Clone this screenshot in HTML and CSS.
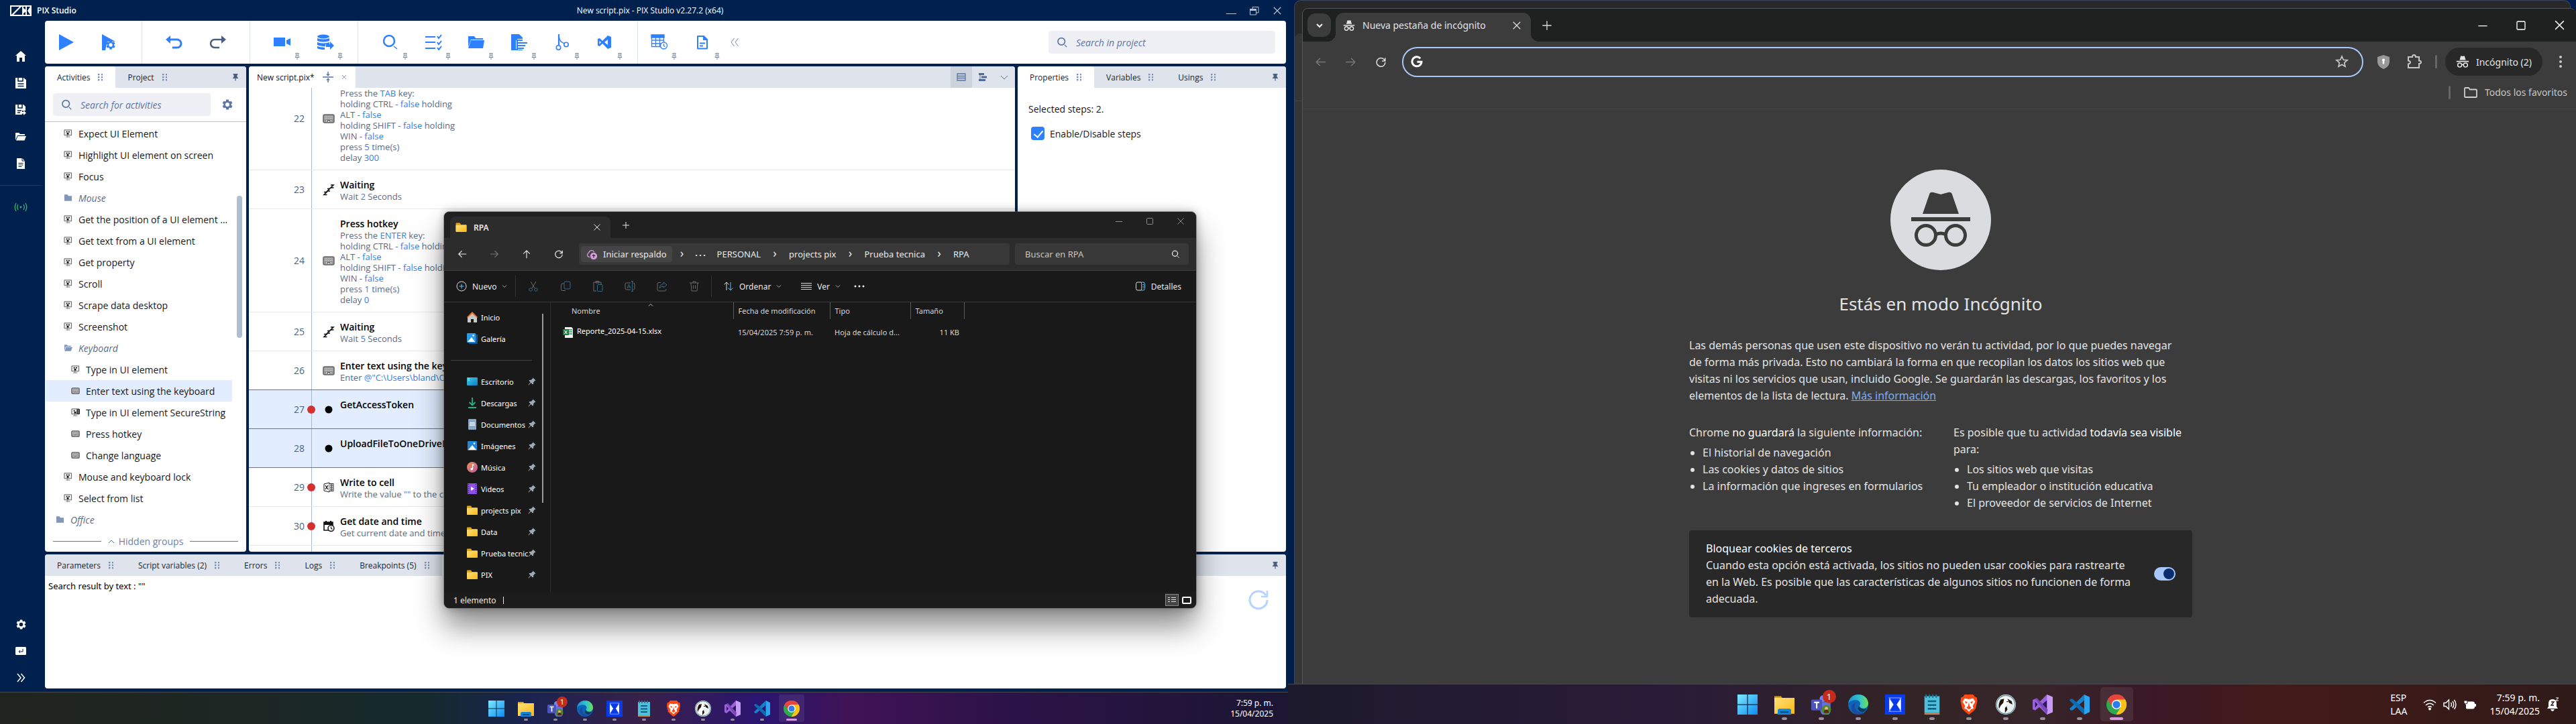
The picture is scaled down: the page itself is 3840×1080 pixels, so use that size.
FILE: index.html
```html
<!DOCTYPE html>
<html lang="es">
<head>
<meta charset="utf-8">
<title>PIX Studio</title>
<link rel="stylesheet" href="styles.css">
</head>
<body>
<svg class="sprite" aria-hidden="true">
  <defs>
    <linearGradient id="gWin" x1="0" y1="0" x2="1" y2="1"><stop offset="0" stop-color="#7fe9ff"/><stop offset="1" stop-color="#0a8cf0"/></linearGradient>
    <linearGradient id="gFolder" x1="0" y1="0" x2="1" y2="1"><stop offset="0" stop-color="#ffe07a"/><stop offset="1" stop-color="#f9b915"/></linearGradient>
    <linearGradient id="gEdge" x1="0" y1="0" x2="1" y2="0"><stop offset="0" stop-color="#1b8fd8"/><stop offset=".6" stop-color="#35c6c8"/><stop offset="1" stop-color="#6fe04e"/></linearGradient>
    <linearGradient id="gDesk" x1="0" y1="0" x2="1" y2="1"><stop offset="0" stop-color="#3ed0e8"/><stop offset="1" stop-color="#0b7cc0"/></linearGradient>
    <linearGradient id="gMusic" x1="0" y1="0" x2="1" y2="1"><stop offset="0" stop-color="#f09055"/><stop offset="1" stop-color="#b85a9a"/></linearGradient>
  </defs>
  <symbol id="ui" viewBox="0 0 14 14"><path d="M1 1.500h11.500v8.500H1z" fill="#eee" stroke="#555"/><path d="M6 10v2M3.500 12.500h6.500" stroke="#666" fill="none"/><path d="M4 3.500h2v2H4zM7.500 3.500h2v2h-2zM5 6h3v3H5z" fill="#111"/></symbol>
  <symbol id="uis" viewBox="0 0 14 14"><path d="M1 1.500h11.500v8.500H1z" fill="#eee" stroke="#555"/><path d="M6 10v2M3.500 12.500h6.500" stroke="#666" fill="none"/><path d="M4 3.500h2v2H4zM5 6h3v3H5z" fill="#111"/><path d="M9 2h5v8H9z" fill="#222"/><path d="M10.500 4h2M10.500 6h2M10.500 8h2" stroke="#ccc"/></symbol>
  <symbol id="key" viewBox="0 0 18 14"><rect x="1" y="1" width="16" height="12" rx="2" fill="#999" stroke="#666" stroke-width="1.500"/><path d="M3 4h12M3 6.500h12" stroke="#ddd" stroke-dasharray="1.500 1"/><path d="M5 9h8v3H5z" fill="#ccc"/><path d="M7 12V9.500h4V12" fill="none" stroke="#555"/></symbol>
  <symbol id="fold" viewBox="0 0 14 12"><path d="M1 1h5l1.500 2H13v8H1z" fill="#8496b5"/></symbol>
  <symbol id="foldo" viewBox="0 0 14 12"><path d="M1 11V1h4l1.500 1.500H12V4H3z" fill="#8496b5"/><path d="M3.500 5H14l-2.500 6H1.500z" fill="#8496b5"/></symbol>
  <symbol id="zzz" viewBox="0 0 18 18"><path d="M2 12.500h4L2 16.500h4.500M7 7.500h3.500L7 11h4M12 2h4l-4 4h4.500" fill="none" stroke="#111" stroke-width="1.600"/></symbol>
  <symbol id="dot" viewBox="0 0 18 18"><circle cx="9" cy="9" r="5.500"/></symbol>
  <symbol id="xl" viewBox="0 0 18 18"><path d="M2 4l8-2v14l-8-2z" fill="#fff" stroke="#222"/><path d="M4 6l4 6M8 6l-4 6" stroke="#111" stroke-width="1.300"/><path d="M10 3.500h6v11h-6" fill="#ddd" stroke="#333"/><path d="M11 6h4M11 9h4M11 12h4M13 4v10" stroke="#444"/></symbol>
  <symbol id="cal" viewBox="0 0 18 18"><path d="M2 3h13v12H2z" fill="none" stroke="#111" stroke-width="1.600"/><path d="M2 3h13v4H2zM4 1h2v3H4zM11 1h2v3h-2z" fill="#111"/><circle cx="12.500" cy="12" r="4.500" fill="#fff" stroke="#111" stroke-width="1.500"/><path d="M12.500 9.500V12l2 1.500" fill="none" stroke="#111" stroke-width="1.200"/></symbol>
  <symbol id="gear" viewBox="0 0 24 24"><path fill="currentColor" fill-rule="evenodd" d="M19.400 13a7.500 7.500 0 0 0 0-2l2.100-1.600a.5.5 0 0 0 .1-.6l-2-3.500a.5.5 0 0 0-.6-.2l-2.500 1a7.300 7.300 0 0 0-1.700-1L14.500 2.400a.5.5 0 0 0-.5-.4h-4a.5.5 0 0 0-.5.400L9.200 5.100a7.700 7.700 0 0 0-1.700 1l-2.500-1a.5.5 0 0 0-.6.200l-2 3.500a.5.5 0 0 0 .1.600L4.600 11a7.900 7.900 0 0 0 0 2l-2.100 1.600a.5.5 0 0 0-.1.600l2 3.500c.1.200.4.300.6.200l2.500-1a7.300 7.300 0 0 0 1.700 1l.4 2.700c0 .2.200.4.500.4h4c.2 0 .5-.2.500-.4l.4-2.700a7.700 7.700 0 0 0 1.700-1l2.500 1c.2.100.5 0 .6-.2l2-3.500a.5.5 0 0 0-.1-.6zM12 16a4 4 0 1 1 0-8 4 4 0 0 1 0 8z"/></symbol>
  <symbol id="mag" viewBox="0 0 20 20"><circle cx="8.500" cy="8" r="6.200" fill="none" stroke="currentColor" stroke-width="2"/><path d="M14 14l4 4" stroke="currentColor" stroke-width="1.500"/></symbol>
  <symbol id="pin" viewBox="0 0 10 12"><path fill="currentColor" d="M1.500 1h7v1.500h-1V6l1.500 1v1H5.600v3.500H4.400V8H1V7l1.500-1V2.500h-1z"/></symbol>
  <symbol id="pino" viewBox="0 0 8 12"><path d="M1.500 1.500h5M2.200 2v4L1 7.500h6L5.800 6V2M4 7.500V11M4 3v3" fill="none" stroke="#7487a8"/></symbol>
  <symbol id="wpin" viewBox="0 0 12 12"><path d="M7.500.5l4 4-1.300.6-2 2.200-.2 2.500-1 .6-2.400-2.400L1 11.500l-.5-.5 3.300-3.700L1.500 5l.7-1 2.600-.2L7 1.800z" fill="#a0a8b0"/></symbol>
  <symbol id="wfold" viewBox="0 0 16 16"><path d="M0 2.500A1 1 0 0 1 1 1.500h5L7.500 4H15a1 1 0 0 1 1 1v9a1 1 0 0 1-1 1H1a1 1 0 0 1-1-1z" fill="#e8a40c"/><path d="M0 5h16v9a1 1 0 0 1-1 1H1a1 1 0 0 1-1-1z" fill="url(#gFolder)"/></symbol>
  <symbol id="chev" viewBox="0 0 8 8"><path d="M1 2.500l3 3 3-3" fill="none" stroke="currentColor"/></symbol>
  <symbol id="x" viewBox="0 0 12 12"><path d="M1.500 1.500l9 9M10.500 1.500l-9 9" stroke="currentColor" fill="none"/></symbol>
  <symbol id="plus" viewBox="0 0 12 12"><path d="M6 1v10M1 6h10" stroke="currentColor" fill="none"/></symbol>
  <symbol id="min" viewBox="0 0 12 12"><path d="M1 6.500h10" stroke="currentColor"/></symbol>
  <symbol id="max" viewBox="0 0 12 12"><rect x="1.500" y="1.500" width="9" height="9" rx="1" fill="none" stroke="currentColor"/></symbol>
  <symbol id="back" viewBox="0 0 16 16"><path d="M15 8H2M7.500 2.500L2 8l5.500 5.500" fill="none" stroke="currentColor" stroke-width="1.300"/></symbol>
  <symbol id="fwd" viewBox="0 0 16 16"><path d="M1 8h13M8.500 2.500L14 8l-5.500 5.500" fill="none" stroke="currentColor" stroke-width="1.300"/></symbol>
  <symbol id="up" viewBox="0 0 16 16"><path d="M8 15V2M2.500 7.500L8 2l5.500 5.500" fill="none" stroke="currentColor" stroke-width="1.300"/></symbol>
  <symbol id="reload" viewBox="0 0 16 16"><path d="M13.500 6A6 6 0 1 0 14 8.500M14 2v4.500H9.500" fill="none" stroke="currentColor" stroke-width="1.400"/></symbol>
  <symbol id="spy" viewBox="0 0 24 24"><path fill="currentColor" d="M8.500 2.500c.3-.8 1-1 1.700-.8l1.800.6 1.800-.6c.7-.2 1.400 0 1.700.8L17.500 9H6.500zM1 10.500h22v2H1z"/><g fill="none" stroke="currentColor" stroke-width="1.900"><circle cx="6.800" cy="18" r="3.600"/><circle cx="17.200" cy="18" r="3.600"/><path d="M10.300 17.500q1.700-1.200 3.400 0"/></g></symbol>
  <!-- task bar programs -->
  <symbol id="t-win" viewBox="0 0 24 24"><path fill="url(#gWin)" d="M0 0h11.500v11.500H0zM12.500 0H24v11.500H12.500zM0 12.500h11.500V24H0zM12.500 12.500H24V24H12.500z"/></symbol>
  <symbol id="t-exp" viewBox="0 0 24 24"><path d="M0 2h8l2 3H0z" fill="#e0a008"/><path d="M0 4h24v19H0z" fill="url(#gFolder)"/><path d="M4 24v-5a2 2 0 0 1 2-2h12a2 2 0 0 1 2 2v5z" fill="#1583d6"/><path d="M7 20h10v2H7z" fill="#0b4f8c"/></symbol>
  <symbol id="t-team" viewBox="0 0 24 24"><circle cx="14" cy="5" r="4" fill="#7b83eb"/><path d="M9 9h14v9a6 6 0 0 1-12 2z" fill="#6870d8"/><rect y="6" width="13" height="13" rx="1.500" fill="#4b53bc"/><path d="M3.500 9.500h6M6.500 9.500v7" stroke="#fff" stroke-width="1.700"/><circle cx="18" cy="18" r="5.500" fill="#4a8a28"/><circle cx="18" cy="16.500" r="2" fill="#e8b08a"/><path d="M15 22q0-4 3-4t3 4z" fill="#5a2a20"/></symbol>
  <symbol id="t-edge" viewBox="0 0 24 24"><circle cx="12" cy="12" r="12" fill="#0c66b8"/><path d="M0 11C1 4 6 0 12 0c7 0 12 5 12 10.500 0 4-3 6-6 6-3 0-4.500-1.300-4.500-2.500s1-1.500 1-3.200C14.500 8 12 6.500 9 6.500 4.500 6.500 1 8.500 0 11z" fill="url(#gEdge)"/><path d="M8 12c-1 6 4 10 10 9.500C12 26 4 23 4 16c0-3 2-5.500 5-6z" fill="#1b4aa0"/><path d="M13.500 14c1 3 5 4 8.500 3-1 2-3 3.500-5 4-5-1-7-5-3.500-7z" fill="#0d2638" opacity=".7"/></symbol>
  <symbol id="t-pix" viewBox="0 0 24 24"><path d="M0 0h24v24H0z" fill="#0a3be8"/><path d="M5 4h14l-4.500 8L19 20H5l4.500-8z" fill="none" stroke="#8fa8ff"/><path d="M5 5l5 7-5 7zM19 5l-5 7 5 7z" fill="#fff"/><path d="M7 4.500h10L12 11zM7 19.500h10L12 13z" fill="#0a3be8"/></symbol>
  <symbol id="t-note" viewBox="0 0 24 24"><path d="M3 2h18v20H3z" fill="#4fc0dc"/><path d="M3 22h18v2H3z" fill="#d0824a"/><path d="M5 0v4M9 0v4M13 0v4M17 0v4" stroke="#1a7b9a" stroke-width="1.600"/><path d="M7 8h10M7 12.500h10M7 17h10" stroke="#0b5f80" stroke-width="2"/></symbol>
  <symbol id="t-brave" viewBox="0 0 24 24"><path d="M7 0h10l2 2.500 2.500 1L22 8l-2 9-4 4-4 3-4-3-4-4L2 8l.5-4.500L5 2.500z" fill="#fb4a14"/><path d="M7 4.500l5 1 5-1 2.500 4-3 5 1 3-3 1-2.500 3-2.500-3-3-1 1-3-3-5z" fill="#fff"/><path d="M7 8l3.500 1-2 2zM17 8l-3.500 1 2 2zM12 9l1 5 2 1.500L12 18l-3-2.500 2-1.500z" fill="#fb4a14"/></symbol>
  <symbol id="t-beaver" viewBox="0 0 24 24"><circle cx="12" cy="12" r="12" fill="#e8efee"/><circle cx="12" cy="12" r="11" fill="none" stroke="#5d8f92" stroke-width="1"/><path d="M7 5c3-3 8-2 10 1l2 4c-1 2-3 2-5 1l-2 3c2 3 1 6-2 8-3-1-5-3-5-6l3-5z" fill="#fff"/><path d="M6 6l4-1-1 5-3 3-2 4c-1-4 0-8 2-11zM14 5l5 3 1 4-4-2zM11 16l2-2 1 4-3 4zM13 8h2v1h-2z" fill="#20160f"/></symbol>
  <symbol id="t-vs" viewBox="0 0 24 24"><path d="M17 0l7 3v18l-7 3-9-9-5 4-3-1.500v-11L3 5l5 4z" fill="#9a62d8"/><path d="M17 0l7 3v18l-7 3z" fill="#c79bf5"/><path d="M3 8.500v7L6 12zM17 7l-6 5 6 5z" fill="#2a1560"/><path d="M3 5L17 24l1-6L5 4z" fill="#7a48b8"/></symbol>
  <symbol id="t-code" viewBox="0 0 24 24"><path d="M17.500 0L24 3v18l-6.500 3z" fill="#2aa5f0"/><path d="M17.500 0v7L4 18.500 1.500 19 0 17z" fill="#1780c8"/><path d="M17.500 24v-7L4 5.500 1.500 5 0 7z" fill="#0b6cb4"/></symbol>
  <symbol id="t-chrome" viewBox="0 0 24 24"><circle cx="12" cy="12" r="12" fill="#2da94f"/><path d="M12 12L1.600 6A12 12 0 0 1 22.400 6z" fill="#e8453c"/><path d="M1.600 6L7 15l5-9h10.400A12 12 0 0 0 1.600 6z" fill="#e8453c"/><path d="M22.400 6H12l5 9-5.500 9A12 12 0 0 0 22.400 6z" fill="#fbc116"/><circle cx="12" cy="12" r="5.700" fill="#fff"/><circle cx="12" cy="12" r="4.500" fill="#2f7de8"/></symbol>
</svg>

<section class="monitor monitor-left">
  <main class="pix">
    <header class="pix-title">
      <span class="brand"><svg width="32" height="16" viewBox="0 0 32 16"><path d="M0 0h32v16H0z" fill="#fff"/><path d="M2 2h12L2 14zM17 2h1v12h-13L16 3zM20 2h3v12h-3zM25 14V2h5l-4 6 4 6z" fill="#00204d"/><path d="M20 4l5 4-5 4z" fill="#fff"/></svg>PIX Studio</span>
      <h1>New script.pix - PIX Studio v2.27.2 (x64)</h1>
      <span class="pix-ctl">
        <button aria-label="Minimize"><svg width="16" height="14"><path d="M0 11.500h15" stroke="#b8c2d2"/></svg></button>
        <button aria-label="Restore"><svg width="16" height="14"><path d="M1.500 5h9v8h-9zM5 4V1.500h9V10h-3" fill="none" stroke="#b8c2d2"/><path d="M1 4h10v3H1z" fill="#b8c2d2"/></svg></button>
        <button aria-label="Close"><svg width="14" height="14" class="c-b8"><use href="#x"/></svg></button>
      </span>
    </header>
    <div class="pix-body">
      <nav class="rail" aria-label="Main menu">
        <button aria-label="Home"><svg width="16" height="16"><path d="M8 0l8 7h-2v9h-4v-6H6v6H2V7H0z" fill="#fff"/></svg></button>
        <button aria-label="Save"><svg width="16" height="16"><path d="M0 0h12l4 3v13H0z" fill="#fff"/><path d="M4 0v5h7V0M3.500 9h9M3.500 12.500h9" fill="none" stroke="#00204d" stroke-width="1.500"/></svg></button>
        <button aria-label="Save as"><svg width="16" height="16"><path d="M0 0h12l3 3v6h-5v6H0z" fill="#fff"/><path d="M4 0v5h6V0M3 9h6M3 12h4" fill="none" stroke="#00204d" stroke-width="1.500"/><path d="M8 11h4V8.500l4 4-4 3.500v-2.500H8z" fill="#fff"/></svg></button>
        <button aria-label="Open"><svg width="16" height="12"><path d="M0 11V0h5l2 2h7v2H3z" fill="#fff"/><path d="M3.500 5H16l-2.500 6.500H1z" fill="#fff"/></svg></button>
        <button aria-label="New"><svg width="14" height="16"><path d="M1 0h8l4 4v12H1z" fill="#fff"/><path d="M9 0v4h4M3.500 7.500h7M3.500 10h7M3.500 12.500h5" fill="none" stroke="#00204d"/></svg></button>
        <hr>
        <button aria-label="Connection"><svg width="20" height="14" fill="none" stroke="#39b56a" stroke-width="1.300"><path d="M3 1q-3.500 6 0 12M6 3q-2.500 4 0 8M17 1q3.500 6 0 12M14 3q2.500 4 0 8"/><circle cx="10" cy="7" r=".8"/></svg></button>
        <span class="grow"></span>
        <button aria-label="Settings"><svg width="17" height="17" class="c-w"><use href="#gear"/></svg></button>
        <button aria-label="Console"><svg width="16" height="12"><rect width="16" height="12" rx="1.500" fill="#fff"/><path d="M11 3v4H5M7 5L5 7l2 2" fill="none" stroke="#00204d"/></svg></button>
        <button aria-label="Expand"><svg width="14" height="14" fill="none" stroke="#fff" stroke-width="1.500"><path d="M2 1l5 6-5 6M7.500 1l5 6-5 6"/></svg></button>
      </nav>
      <div class="work">
        <div class="tools">
          <div class="grp first">
            <button aria-label="Run"><svg width="24" height="24"><path d="M1 0l22 12L1 24z" fill="#2f80ff"/></svg></button>
            <button aria-label="Debug"><svg width="24" height="24"><path d="M1 0l20 11H9l-3 13H1z" fill="#2f80ff"/><svg x="6" y="8" width="16" height="16" class="c-blue"><use href="#gear"/></svg></svg></button>
          </div>
          <div class="grp">
            <button aria-label="Undo"><svg width="26" height="20" fill="none" stroke="#2f80ff" stroke-width="3"><path d="M3 6h14a6 6 0 0 1 0 12h-7"/><path d="M0 6l7-6v12z" fill="#2f80ff" stroke="none"/></svg></button>
            <button aria-label="Redo"><svg width="26" height="20" fill="none" stroke="#4a5f80" stroke-width="2.500"><path d="M23 6H9a6 6 0 0 0 0 12h7"/><path d="M26 6l-7-6v12z" fill="#4a5f80" stroke="none"/></svg></button>
          </div>
          <div class="grp">
            <button aria-label="Record"><svg width="26" height="14" fill="#2f80ff"><path d="M0 0h17v13H0zM19 4l6-3v11l-6-3z"/></svg><svg class="tp"><use href="#pino"/></svg></button>
            <button aria-label="Database"><svg width="26" height="24" fill="#2f80ff"><ellipse cx="10" cy="3.500" rx="9" ry="3"/><path d="M1 6q9 3 18 0v4q-9 3-18 0zM1 12q9 3 18 0v3h-6v3q-8 0-12-2zM1 18q5 2 11 1.800V23Q4 23 1 21z"/><path d="M14 15h6v-4l6 6-6 6v-4h-6z"/></svg><svg class="tp"><use href="#pino"/></svg></button>
          </div>
          <div class="grp">
            <button aria-label="Find"><svg width="26" height="24" fill="none" stroke="#2f80ff"><circle cx="11" cy="10" r="8" stroke-width="2.500"/><path d="M18 18l5 4" stroke-width="1.500"/></svg><svg class="tp"><use href="#pino"/></svg></button>
            <button aria-label="Checks"><svg width="26" height="24" fill="none" stroke="#2f80ff" stroke-width="2"><path d="M1 4h15M1 12h15M1 21h15M19 3l2 3 4-5M19 12l2 3 4-5M19 20l2 3 4-5"/></svg><svg class="tp"><use href="#pino"/></svg></button>
            <button aria-label="Folder"><svg width="26" height="22" fill="#2f80ff"><path d="M1 18V2h9l2 3h11v2H5z"/><path d="M5 8h20l-2 12H1z"/></svg><svg class="tp"><use href="#pino"/></svg></button>
            <button aria-label="Outline"><svg width="26" height="24"><path d="M1 0h12l5 5v19H1z" fill="#2f80ff"/><path d="M10 9h8M11 13h14M11 17h11M11 21h9M10 9v13" stroke="#fff" stroke-width="4"/><path d="M10 9h8M11 13h14M11 17h11M11 21h9M10 9v13" stroke="#2f80ff" stroke-width="2"/></svg><svg class="tp"><use href="#pino"/></svg></button>
            <button aria-label="Branch"><svg width="20" height="24" fill="none" stroke="#2f80ff" stroke-width="1.600"><path d="M5 0v17" stroke-width="2.200"/><path d="M5 3q1 9 9 11"/><circle cx="4.500" cy="20" r="3.200"/><circle cx="16" cy="15.500" r="3.200"/></svg><svg class="tp"><use href="#pino"/></svg></button>
            <button aria-label="Visual Studio"><svg width="22" height="20"><path fill="#2f80ff" fill-rule="evenodd" d="M0 5l3-1 4 4L15 0l5 2v16l-5 2-8-8-4 4-3-1zM2.500 8v5L5 10zM15 6l-5 4 5 4z"/></svg><svg class="tp"><use href="#pino"/></svg></button>
          </div>
          <div class="grp last">
            <button aria-label="Schedule"><svg width="26" height="24" fill="none" stroke="#2f80ff" stroke-width="1.300"><path d="M1.500 1.500h18v17h-18zM1.500 9h18M1.500 14h18M7.500 4v14M13.500 4v14"/><path d="M1 1h19v4H1z" fill="#2f80ff"/><circle cx="19.500" cy="17" r="5" fill="#fff"/><path d="M19.500 14v3.500l2 1"/></svg><svg class="tp"><use href="#pino"/></svg></button>
            <button aria-label="Report"><svg width="18" height="22"><path fill="#2f80ff" fill-rule="evenodd" d="M3 1h8.500L17 6.500V20a1.500 1.500 0 0 1-1.500 1.500h-13A1.500 1.500 0 0 1 1 20V2.500A1.500 1.500 0 0 1 3 1zM3 3v16.500h12V8h-5V3z"/><path d="M5 12.500h8M5 16.500h5" stroke="#2f80ff" stroke-width="1.800"/></svg><svg class="tp"><use href="#pino"/></svg></button>
          </div>
          <button class="fold-btn" aria-label="Collapse"><svg width="12" height="14" fill="none" stroke="#7487a8"><path d="M5.500 1L1 7l4.500 6M11.500 1L7 7l4.500 6"/></svg></button>
          <label class="field field-project"><svg width="17" height="17"><use href="#mag"/></svg><input type="search" placeholder="Search in project" aria-label="Search in project"></label>
        </div>

        <div class="panels">
          <section class="panel acts">
            <div class="tabs"><button class="tab on">Activities<i class="grip"></i></button><button class="tab">Project<i class="grip"></i></button><button class="tabpin" aria-label="Pin"><svg width="10" height="12"><use href="#pin"/></svg></button></div>
            <div class="findrow"><label class="field field-act"><svg width="17" height="17"><use href="#mag"/></svg><input type="search" placeholder="Search for activities" aria-label="Search for activities"></label><button aria-label="Filter settings"><svg width="18" height="18" class="c-slate"><use href="#gear"/></svg></button></div>
            <ul class="tree">
              <li><svg><use href="#ui"/></svg>Expect UI Element</li>
              <li><svg><use href="#ui"/></svg>Highlight UI element on screen</li>
              <li><svg><use href="#ui"/></svg>Focus</li>
              <li class="cat"><svg><use href="#fold"/></svg>Mouse</li>
              <li><svg><use href="#ui"/></svg><span>Get the position of a UI element on screen</span></li>
              <li><svg><use href="#ui"/></svg>Get text from a UI element</li>
              <li><svg><use href="#ui"/></svg>Get property</li>
              <li><svg><use href="#ui"/></svg>Scroll</li>
              <li><svg><use href="#ui"/></svg>Scrape data desktop</li>
              <li><svg><use href="#ui"/></svg>Screenshot</li>
              <li class="cat"><svg><use href="#foldo"/></svg>Keyboard</li>
              <li class="sub"><svg><use href="#ui"/></svg>Type in UI element</li>
              <li class="sub sel"><svg><use href="#key"/></svg>Enter text using the keyboard</li>
              <li class="sub"><svg><use href="#uis"/></svg>Type in UI element SecureString</li>
              <li class="sub"><svg><use href="#key"/></svg>Press hotkey</li>
              <li class="sub"><svg><use href="#key"/></svg>Change language</li>
              <li><svg><use href="#ui"/></svg>Mouse and keyboard lock</li>
              <li><svg><use href="#ui"/></svg>Select from list</li>
              <li class="cat top"><svg><use href="#fold"/></svg>Office</li>
            </ul>
            <div class="hidden-groups"><svg width="10" height="7"><path d="M1 6l4-4 4 4" fill="none" stroke="#5b76a3"/></svg>Hidden groups</div>
            <i class="scroll"></i>
          </section>

          <section class="panel editor">
            <div class="tabs"><button class="tab doc on">New script.pix*<svg width="16" height="16" fill="none" stroke="#5b76a3" stroke-width="1.500"><path d="M0 8h16M8 0v6M8 10v6"/><path d="M5 3.500h6L8 6.500zM5 12.500h6L8 9.500z" fill="#5b76a3" stroke="none"/></svg><svg width="8" height="8" class="c-slate"><use href="#x"/></svg></button>
              <span class="grow"></span>
              <button class="vb on" aria-label="List view"><svg width="14" height="12" fill="none" stroke="#5b76a3" stroke-width="1.300"><path d="M1 1h12v10H1zM1 4.500h12M1 7.500h12"/></svg></button>
              <button class="vb" aria-label="Tree view"><svg width="14" height="12" fill="#4e6a98"><path d="M1 0h8v3H1zM5 4.500h8v3H5zM1 9h10v3H1z"/><path d="M3 3v6" stroke="#4e6a98"/></svg></button>
              <button class="vb" aria-label="More"><svg width="12" height="7"><path d="M1 1l5 5 5-5" fill="none" stroke="#5b76a3"/></svg></button>
            </div>
            <ol class="steps">
              <li><b class="n">22</b><svg><use href="#key"/></svg><div><h3>Press hotkey</h3><p>Press the <em>TAB</em> key:<br>holding CTRL - <em>false</em> holding<br>ALT - <em>false</em><br>holding SHIFT - <em>false</em> holding<br>WIN - <em>false</em><br>press <em>5</em> time(s)<br>delay <em>300</em></p></div></li>
              <li><b class="n">23</b><svg><use href="#zzz"/></svg><div><h3>Waiting</h3><p>Wait <em>2</em> Seconds</p></div></li>
              <li><b class="n">24</b><svg><use href="#key"/></svg><div><h3>Press hotkey</h3><p>Press the <em>ENTER</em> key:<br>holding CTRL - <em>false</em> holding<br>ALT - <em>false</em><br>holding SHIFT - <em>false</em> holding<br>WIN - <em>false</em><br>press <em>1</em> time(s)<br>delay <em>0</em></p></div></li>
              <li><b class="n">25</b><svg><use href="#zzz"/></svg><div><h3>Waiting</h3><p>Wait <em>5</em> Seconds</p></div></li>
              <li><b class="n">26</b><svg><use href="#key"/></svg><div><h3>Enter text using the keyboard</h3><p>Enter <em>@"C:\Users\bland\OneDrive"</em></p></div></li>
              <li class="sel"><b class="n">27</b><i class="bp"></i><svg><use href="#dot"/></svg><div><h3>GetAccessToken</h3><p></p></div></li>
              <li class="sel"><b class="n">28</b><svg><use href="#dot"/></svg><div><h3>UploadFileToOneDriveBusiness</h3><p></p></div></li>
              <li><b class="n">29</b><i class="bp"></i><svg><use href="#xl"/></svg><div><h3>Write to cell</h3><p>Write the value <em>""</em> to the cell</p></div></li>
              <li><b class="n">30</b><i class="bp"></i><svg><use href="#cal"/></svg><div><h3>Get date and time</h3><p>Get current date and time</p></div></li>
              <li class="tail"></li>
            </ol>
          </section>

          <section class="panel props">
            <div class="tabs"><button class="tab on">Properties<i class="grip"></i></button><button class="tab">Variables<i class="grip"></i></button><button class="tab">Usings<i class="grip"></i></button><button class="tabpin" aria-label="Pin"><svg width="10" height="12"><use href="#pin"/></svg></button></div>
            <p class="selinfo">Selected steps: 2.</p>
            <label class="check"><input type="checkbox" checked>Enable/Disable steps</label>
          </section>
        </div>

        <section class="panel results">
          <div class="tabs"><button class="tab">Parameters<i class="grip"></i></button><button class="tab">Script variables (2)<i class="grip"></i></button><button class="tab">Errors<i class="grip"></i></button><button class="tab">Logs<i class="grip"></i></button><button class="tab">Breakpoints (5)<i class="grip"></i></button><button class="tab on">Search results<i class="grip"></i></button><button class="tabpin" aria-label="Pin"><svg width="10" height="12"><use href="#pin"/></svg></button></div>
          <div class="resbody"><p>Search result by text : ""</p><button aria-label="Refresh"><svg width="32" height="32" fill="none" stroke="#b5d3ff" stroke-width="3"><path d="M27 10A13 13 0 1 0 29 17"/><path d="M29 3v9h-9" stroke-width="2.500"/></svg></button></div>
        </section>
      </div>
    </div>
  </main>

  <section class="explorer" aria-label="RPA">
    <div class="x-tabs">
      <div class="x-tab"><svg width="17" height="16"><use href="#wfold"/></svg><span>RPA</span><button aria-label="Cerrar pestaña"><svg width="12" height="12"><use href="#x"/></svg></button></div>
      <button class="x-plus" aria-label="Nueva pestaña"><svg width="12" height="12"><use href="#plus"/></svg></button>
      <span class="grow"></span>
      <span class="x-ctl"><button aria-label="Minimizar"><svg width="12" height="12"><use href="#min"/></svg></button><button aria-label="Maximizar"><svg width="12" height="12"><use href="#max"/></svg></button><button aria-label="Cerrar"><svg width="12" height="12"><use href="#x"/></svg></button></span>
    </div>
    <div class="x-nav">
      <span class="x-arrows"><button aria-label="Atrás"><svg><use href="#back"/></svg></button><button class="dim" aria-label="Adelante"><svg><use href="#fwd"/></svg></button><button aria-label="Arriba"><svg><use href="#up"/></svg></button><button aria-label="Actualizar"><svg><use href="#reload"/></svg></button></span>
      <nav class="x-path"><button class="chip"><svg width="17" height="16" fill="none" stroke="#d99be0" stroke-width="1.300"><path d="M5 12.500H4a3.500 3.500 0 0 1-.3-6.500A4.500 4.500 0 0 1 12 5"/><circle cx="11" cy="11" r="4.500" fill="#d99be0"/><path d="M11 13.500V9M9 10.800L11 9l2 1.800" stroke="#333"/></svg>Iniciar respaldo</button><i>›</i><button>⋯</button><button>PERSONAL</button><i>›</i><button>projects pix</button><i>›</i><button>Prueba tecnica</button><i>›</i><button>RPA</button></nav>
      <label class="x-search"><input type="search" placeholder="Buscar en RPA" aria-label="Buscar en RPA"><svg width="13" height="13"><use href="#mag"/></svg></label>
    </div>
    <div class="x-cmd">
      <button class="new"><svg width="16" height="16" fill="none"><circle cx="8" cy="8" r="7" stroke="#ddd"/><path d="M8 4.500v7M4.500 8h7" stroke="#5cc3f5"/></svg>Nuevo<svg class="cv"><use href="#chev"/></svg></button>
      <span class="x-acts">
        <button aria-label="Cortar"><svg fill="none" stroke="#6a6a6a"><path d="M4 1l6 10M12 1L6 11"/><g stroke="#2f6a86"><circle cx="4" cy="13" r="2.300"/><circle cx="12" cy="13" r="2.300"/></g></svg></button>
        <button aria-label="Copiar"><svg fill="none"><rect x="6" y="1" width="9" height="11" rx="2" stroke="#2f6a86"/><path d="M6 4H3.500A2 2 0 0 0 1.500 6v6.500a2 2 0 0 0 2 2H8" stroke="#6a6a6a"/></svg></button>
        <button aria-label="Pegar"><svg fill="none"><path d="M6 15H2V2h11v3M5 2V.5h5V3H5z" stroke="#6a6a6a"/><rect x="7.500" y="5.500" width="7.500" height="10" rx="1" stroke="#2f6a86"/></svg></button>
        <button aria-label="Cambiar nombre"><svg fill="none"><path d="M9 3H3a2 2 0 0 0-2 2v6a2 2 0 0 0 2 2h6M13 3a2 2 0 0 1 2 2v6a2 2 0 0 1-2 2" stroke="#6a6a6a"/><path d="M4 11l2.500-6L9 11M5 9h3M11.500 1v14M10 .5h3M10 15.500h3" stroke="#2f6a86"/></svg></button>
        <button aria-label="Compartir"><svg fill="none"><path d="M6 2.500H3a2 2 0 0 0-2 2V13a2 2 0 0 0 2 2h9a2 2 0 0 0 2-2v-1" stroke="#6a6a6a"/><path d="M10 2l5 4-5 4V8Q6 8 4 11q1-6 6-6.500z" stroke="#2f6a86"/></svg></button>
        <button aria-label="Eliminar"><svg fill="none" stroke="#6a6a6a"><path d="M1 3h14M6 3V1h4v2M3 3l1 12h8l1-12M6.500 6.500v5M9.500 6.500v5"/></svg></button>
      </span>
      <button class="sort"><svg width="16" height="16" fill="none"><path d="M5 14V2M1.500 5.500L5 2l3.500 3.500" stroke="#ddd"/><path d="M11 2v12M7.500 10.500L11 14l3.500-3.500" stroke="#5cc3f5"/></svg>Ordenar<svg class="cv"><use href="#chev"/></svg></button>
      <button class="view"><svg width="16" height="16" stroke="#ddd"><path d="M0 3.500h16M0 6.500h16M0 9.500h16M0 12.500h16"/></svg>Ver<svg class="cv"><use href="#chev"/></svg></button>
      <button class="more" aria-label="Más"><svg width="16" height="4" fill="#eee"><circle cx="2" cy="2" r="1.500"/><circle cx="8" cy="2" r="1.500"/><circle cx="14" cy="2" r="1.500"/></svg></button>
      <span class="grow"></span>
      <button class="det"><svg width="16" height="16" fill="none"><path d="M9 2H4a2.500 2.500 0 0 0-2.500 2.500v7A2.500 2.500 0 0 0 4 14h5" stroke="#ddd"/><path d="M9.500 2H12a2.500 2.500 0 0 1 2.500 2.500v7A2.500 2.500 0 0 1 12 14H9.500zM11 5.500h2M11 8h2M11 10.500h2" stroke="#5cc3f5"/></svg>Detalles</button>
    </div>
    <div class="x-body">
      <nav class="x-side">
        <ul>
          <li><svg viewBox="0 0 16 16"><path d="M1 8l7-6 7 6v8h-5v-5H6v5H1z" fill="#c8c8c8"/><path d="M0 8l8-8 8 8-1 1-7-6-7 6z" fill="#e8732a"/></svg><span>Inicio</span></li>
          <li><svg viewBox="0 0 16 16"><rect x="3" y="2" width="13" height="14" rx="1" fill="#0c5a9c"/><rect width="13" height="14" rx="1" fill="#2b9be8"/><path d="M1 13l6-7 5 7z" fill="#fff"/><circle cx="9.500" cy="3.500" r="1.200" fill="#fff"/></svg><span>Galería</span></li>
        </ul>
        <hr>
        <ul>
          <li><svg viewBox="0 0 16 16"><rect y="2" width="16" height="12" rx="1" fill="url(#gDesk)"/><path d="M2 4h1.500M2 6.500h1.500" stroke="#fff"/></svg><span>Escritorio</span><svg class="wp"><use href="#wpin"/></svg></li>
          <li><svg viewBox="0 0 16 16" fill="none" stroke="#25b089" stroke-width="1.800"><path d="M8 0v11M3.500 7L8 11.500 12.500 7M2 15h12"/></svg><span>Descargas</span><svg class="wp"><use href="#wpin"/></svg></li>
          <li><svg viewBox="0 0 16 16"><rect x="2" width="12" height="16" rx="1" fill="#8aa8c8"/><path d="M4 6h8M4 9h8" stroke="#fff" stroke-width="1.500"/></svg><span>Documentos</span><svg class="wp"><use href="#wpin"/></svg></li>
          <li><svg viewBox="0 0 16 16"><rect x="1" y="1" width="14" height="14" rx="1" fill="#1f86d8"/><path d="M2 14l6-7 6 7z" fill="#fff"/><circle cx="11" cy="4.500" r="1.300" fill="#fff"/></svg><span>Imágenes</span><svg class="wp"><use href="#wpin"/></svg></li>
          <li><svg viewBox="0 0 16 16"><circle cx="8" cy="8" r="8" fill="url(#gMusic)"/><path d="M8.500 10.500V4l2.500 1" fill="none" stroke="#fff" stroke-width="1.300"/><circle cx="7.200" cy="10.800" r="1.700" fill="#fff"/></svg><span>Música</span><svg class="wp"><use href="#wpin"/></svg></li>
          <li><svg viewBox="0 0 16 16"><rect x="1" width="14" height="16" rx="1" fill="#9150e8"/><path d="M2.500 1v14M13.500 1v14" stroke="#4c2098" stroke-width="1.500" stroke-dasharray="1.500 1.500"/><path d="M6 5l5 3-5 3z" fill="#fff"/></svg><span>Videos</span><svg class="wp"><use href="#wpin"/></svg></li>
          <li><svg><use href="#wfold"/></svg><span>projects pix</span><svg class="wp"><use href="#wpin"/></svg></li>
          <li><svg><use href="#wfold"/></svg><span>Data</span><svg class="wp"><use href="#wpin"/></svg></li>
          <li><svg><use href="#wfold"/></svg><span>Prueba tecnica</span><svg class="wp"><use href="#wpin"/></svg></li>
          <li><svg><use href="#wfold"/></svg><span>PIX</span><svg class="wp"><use href="#wpin"/></svg></li>
        </ul>
        <i class="x-scroll"></i>
      </nav>
      <table class="files">
        <thead><tr><th class="c1">Nombre<svg class="caret" viewBox="0 0 8 8"><path d="M1 5.500l3-3 3 3" fill="none" stroke="#bbb"/></svg></th><th class="c2">Fecha de modificación</th><th class="c3">Tipo</th><th class="c4">Tamaño</th></tr></thead>
        <tbody><tr><td><svg width="16" height="16" viewBox="0 0 16 16"><path d="M3 0h10l2 2v14H3z" fill="#f2f2f2"/><path d="M9 4h5M9 7h5M9 10h5" stroke="#2a9a5c" stroke-width="1.500"/><rect y="3" width="9" height="9" fill="#15803f"/><path d="M2.500 5l4 5M6.500 5l-4 5" stroke="#fff" stroke-width="1.200"/></svg>Reporte_2025-04-15.xlsx</td><td>15/04/2025 7:59 p. m.</td><td>Hoja de cálculo d...</td><td class="num">11 KB</td></tr></tbody>
      </table>
    </div>
    <footer class="x-status">1 elemento<i></i><span class="grow"></span>
      <button class="on" aria-label="Detalles"><svg width="12" height="10" stroke="#ddd"><path d="M0 1.500h3M5 1.500h7M0 4.500h3M5 4.500h7M0 7.500h3M5 7.500h7"/></svg></button>
      <button aria-label="Iconos grandes"><svg width="14" height="11"><rect x="1" y="1" width="12" height="9" rx="1" fill="none" stroke="#fff" stroke-width="2"/></svg></button>
    </footer>
  </section>

  <footer class="bar bar-left">
    <span></span>
    <nav class="apps">
      <button aria-label="Inicio"><svg><use href="#t-win"/></svg></button>
      <button class="run" aria-label="Explorador"><svg><use href="#t-exp"/></svg></button>
      <button class="run" aria-label="Teams"><svg><use href="#t-team"/></svg><span class="badge">1</span></button>
      <button class="run" aria-label="Edge"><svg><use href="#t-edge"/></svg></button>
      <button class="run" aria-label="PIX"><svg><use href="#t-pix"/></svg></button>
      <button class="run" aria-label="Bloc de notas"><svg><use href="#t-note"/></svg></button>
      <button class="run" aria-label="Brave"><svg><use href="#t-brave"/></svg></button>
      <button class="run" aria-label="DBeaver"><svg><use href="#t-beaver"/></svg></button>
      <button class="run" aria-label="Visual Studio"><svg><use href="#t-vs"/></svg></button>
      <button class="run" aria-label="Visual Studio Code"><svg><use href="#t-code"/></svg></button>
      <button class="run active" aria-label="Chrome"><svg><use href="#t-chrome"/></svg></button>
    </nav>
    <div class="tray"><time>7:59 p. m.<br>15/04/2025</time></div>
  </footer>
</section>

<section class="monitor monitor-right">
  <div class="desk">
    <div class="behind"><i></i></div>
    <main class="chrome">
      <div class="c-tabs">
        <button class="c-list" aria-label="Buscar pestañas"><svg width="12" height="8" fill="none" stroke="#eee" stroke-width="2"><path d="M2 2l4 4 4-4"/></svg></button>
        <div class="c-tab"><svg width="18" height="18"><use href="#spy"/></svg><span>Nueva pestaña de incógnito</span><button aria-label="Cerrar"><svg width="14" height="14"><use href="#x"/></svg></button></div>
        <button class="c-plus" aria-label="Nueva pestaña"><svg width="16" height="16"><use href="#plus"/></svg></button>
        <span class="grow"></span>
        <span class="c-ctl"><button aria-label="Minimizar"><svg width="16" height="16"><use href="#min"/></svg></button><button aria-label="Maximizar"><svg width="16" height="16"><use href="#max"/></svg></button><button aria-label="Cerrar ventana"><svg width="17" height="17"><use href="#x"/></svg></button></span>
      </div>
      <div class="c-bar">
        <span class="c-arrows"><button class="dim" aria-label="Atrás"><svg><use href="#back"/></svg></button><button class="dim" aria-label="Adelante"><svg><use href="#fwd"/></svg></button><button aria-label="Recargar"><svg><use href="#reload"/></svg></button></span>
        <label class="omni"><svg width="18" height="18" viewBox="0 0 18 18" fill="none" stroke="#fff" stroke-width="3"><path d="M14.300 4.200A7 7 0 1 0 16 9.300H9.500"/></svg><input type="text" aria-label="Buscar en Google o escribir una URL"><button aria-label="Favorito"><svg width="20" height="20" viewBox="0 0 20 20"><path d="M10 2l2.300 5.300 5.700.5-4.300 3.800 1.300 5.600L10 14.200l-5 3 1.300-5.600L2 7.800l5.700-.5z" fill="none" stroke="#c7c7c7" stroke-width="1.700"/></svg></button></label>
        <button class="ext" aria-label="Protección"><svg width="18" height="21" viewBox="0 0 18 21"><path d="M9 0l9 3v8q-1 7-9 10-8-3-9-10V3z" fill="#999"/><path d="M9 6.500v7" stroke="#fff" stroke-width="2.500"/><circle cx="9" cy="7.500" r="2" fill="#fff"/></svg></button>
        <button class="ext" aria-label="Extensiones"><svg width="22" height="22" viewBox="0 0 22 22"><path d="M2 4h6q0-3 2.500-3T13 4h5v5.500q3 0 3 2.200T18 14v6H2v-5.500q3-.5 3-2.500T2 9.500z" fill="none" stroke="#c7c7c7" stroke-width="2"/></svg></button>
        <i class="c-sep"></i>
        <button class="incog"><svg width="20" height="20"><use href="#spy"/></svg>Incógnito (2)</button>
        <button class="menu" aria-label="Menú"><svg width="4" height="18" fill="#c7c7c7"><circle cx="2" cy="2" r="2"/><circle cx="2" cy="9" r="2"/><circle cx="2" cy="16" r="2"/></svg></button>
      </div>
      <div class="c-fav"><i class="c-sep"></i><button><svg width="20" height="16" fill="none" stroke="#d0d0d0" stroke-width="1.800"><path d="M1 2a1 1 0 0 1 1-1h5l2 2.500h9a1 1 0 0 1 1 1V14a1 1 0 0 1-1 1H2a1 1 0 0 1-1-1z"/></svg>Todos los favoritos</button></div>
      <article class="page">
        <svg class="hero" viewBox="0 0 150 150"><circle cx="75" cy="75" r="75" fill="#dadce0"/><path d="M58 37q1-4 6-3l11 3 11-3q5-1 6 3l10 29H48z" fill="#3c3c3c"/><path d="M31 71h88v6H31z" fill="#3c3c3c"/><g fill="none" stroke="#3c3c3c" stroke-width="5"><circle cx="53" cy="98" r="14.500"/><circle cx="97" cy="98" r="14.500"/><path d="M67 97q8-4 16 0"/></g></svg>
        <h2>Estás en modo Incógnito</h2>
        <p>Las demás personas que usen este dispositivo no verán tu actividad, por lo que puedes navegar<br>de forma más privada. Esto no cambiará la forma en que recopilan los datos los sitios web que<br>visitas ni los servicios que usan, incluido Google. Se guardarán las descargas, los favoritos y los<br>elementos de la lista de lectura. <a href="#">Más información</a></p>
        <div class="cols">
          <div>Chrome <em>no guardará</em> la siguiente información:<ul><li>El historial de navegación</li><li>Las cookies y datos de sitios</li><li>La información que ingreses en formularios</li></ul></div>
          <div>Es posible que tu actividad <em>todavía sea visible</em><br>para:<ul><li>Los sitios web que visitas</li><li>Tu empleador o institución educativa</li><li>El proveedor de servicios de Internet</li></ul></div>
        </div>
        <label class="cookies"><span><em>Bloquear cookies de terceros</em><br>Cuando esta opción está activada, los sitios no pueden usar cookies para rastrearte<br>en la Web. Es posible que las características de algunos sitios no funcionen de forma<br>adecuada.</span><input type="checkbox" role="switch" checked></label>
      </article>
    </main>
  </div>
  <footer class="bar bar-right">
    <span></span>
    <nav class="apps">
      <button aria-label="Inicio"><svg><use href="#t-win"/></svg></button>
      <button class="run" aria-label="Explorador"><svg><use href="#t-exp"/></svg></button>
      <button class="run" aria-label="Teams"><svg><use href="#t-team"/></svg><span class="badge">1</span></button>
      <button class="run" aria-label="Edge"><svg><use href="#t-edge"/></svg></button>
      <button class="run" aria-label="PIX"><svg><use href="#t-pix"/></svg></button>
      <button class="run" aria-label="Bloc de notas"><svg><use href="#t-note"/></svg></button>
      <button class="run" aria-label="Brave"><svg><use href="#t-brave"/></svg></button>
      <button class="run" aria-label="DBeaver"><svg><use href="#t-beaver"/></svg></button>
      <button class="run" aria-label="Visual Studio"><svg><use href="#t-vs"/></svg></button>
      <button class="run" aria-label="Visual Studio Code"><svg><use href="#t-code"/></svg></button>
      <button class="run active" aria-label="Chrome"><svg><use href="#t-chrome"/></svg></button>
    </nav>
    <div class="tray">
      <span class="lang">ESP<br>LAA</span>
      <span class="sys">
        <svg width="20" height="18" viewBox="0 0 20 18" fill="none" stroke="#fff" stroke-width="1.500"><path d="M1 6.500Q10-1.500 19 6.500M4 10q6-5.500 12 0M7 13q3-2.500 6 0"/><circle cx="10" cy="15.500" r="1.200" fill="#fff"/></svg>
        <svg width="20" height="18" viewBox="0 0 20 18" fill="none" stroke="#fff" stroke-width="1.400"><path d="M1 6.500h3L8.500 2v14L4 11.500H1zM11.500 6q2 3 0 6M14 4q3.500 5 0 10M16.500 2q5 7 0 14"/></svg>
        <svg width="20" height="18" viewBox="0 0 20 18"><rect x="3.500" y="5" width="13" height="10" rx="2" fill="#fff" stroke="#fff"/><path d="M18 8v4" stroke="#fff" stroke-width="2"/><path d="M1 3h5v4q-2 2-5 0zM3.500 9v6" fill="#fff" stroke="#30191c"/></svg>
      </span>
      <time>7:59 p. m.<br>15/04/2025</time>
      <svg width="20" height="22" viewBox="0 0 20 22"><path d="M4 9q0-6 6-6t6 6v5l2 3H2l2-3zM7 18h6q-1 3-3 3t-3-3z" fill="#fff"/><path d="M8 7h4l-4 5h4" fill="none" stroke="#30191c" stroke-width="1.400"/><path d="M15 1h4l-4 4h4" fill="none" stroke="#fff"/></svg>
    </div>
  </footer>
</section>
</body>
</html>
```
FILE: styles.css
```css
* { box-sizing: border-box; }
body { margin: 0; display: flex; height: 100vh; font-family: "Noto Sans", "Open Sans", sans-serif; overflow: hidden; }
button { all: unset; box-sizing: border-box; display: flex; align-items: center; justify-content: center; flex: none; cursor: default; white-space: nowrap; }
input { min-width: 0; border: 0; background: none; outline: 0; padding: 0; font: inherit; color: inherit; }
h1, h2, h3, p, ul, ol { margin: 0; padding: 0; font-weight: 400; }
ul, ol { list-style: none; }
em { font-style: normal; }
svg { flex: none; }
.sprite { position: absolute; width: 0; height: 0; }
.grow { flex: 1; }
.c-w { color: #fff; }
.c-b8 { color: #b8c2d2; }
.c-blue { color: #2f80ff; }
.c-slate { color: #5b76a3; }

.monitor { flex: 1; min-width: 0; display: flex; flex-direction: column; position: relative; }

/* PIX Studio */
.pix { flex: 1; min-height: 0; display: flex; flex-direction: column; background: #00204d; font-family: "Open Sans", sans-serif; font-size: 14px; color: #15181d; }
.pix-title { flex: none; height: 31px; display: grid; grid-template-columns: 1fr auto 1fr; align-items: center; color: #fff; padding: 0 7px 0 15px; }
.pix-title h1 { font-size: 12px; font-weight: 500; padding-left: 10px; }
.brand { display: flex; align-items: center; gap: 8px; font-size: 12px; font-weight: 600; }
.pix-ctl { display: flex; justify-content: flex-end; gap: 16px; }
.pix-ctl button { width: 18px; }
.pix-body { flex: 1; min-height: 0; display: flex; }
.rail { width: 67px; padding: 33px 5px 1px 0; display: flex; flex-direction: column; }
.rail button { height: 40px; }
.rail hr { width: 100%; margin: 12px 0; border: 0; border-top: 1px solid #1b3a66; }
.work { flex: 1; min-width: 0; min-height: 0; display: flex; flex-direction: column; gap: 4px; padding: 0 3px 5px 0; }

.tools { flex: none; height: 64px; background: #fff; border-radius: 4px; display: flex; align-items: center; padding-right: 16px; }
.grp { height: 64px; display: flex; padding: 0 16px; border-right: 1px solid #dde3ec; }
.grp.first { padding-left: 0; }
.grp.last { padding: 0; border-right: 0; }
.grp button { width: 64px; position: relative; }
.tp { position: absolute; right: 6px; bottom: 5px; width: 8px; height: 12px; }
.fold-btn { width: 32px; }

.field { display: flex; align-items: center; gap: 12px; height: 34px; border-radius: 4px; background: #eef0f5; color: #5b76a3; padding-left: 12px; }
.field input { flex: 1; font-style: italic; }
.field input::placeholder { color: #5b76a3; opacity: 1; }
.field-project { width: 338px; margin-left: auto; }

.panels { flex: 1; display: flex; gap: 4px; min-height: 0; }
.panel { background: #fff; border-radius: 4px; overflow: hidden; display: flex; flex-direction: column; position: relative; }
.acts { width: 300px; }
.editor { flex: 1; min-width: 0; }
.props { width: 400px; }
.tabs { display: flex; height: 32px; background: #dfe3eb; flex: none; }
.tab { font-size: 12px; font-weight: 500; gap: 12px; padding: 0 19px 0 18px; border-radius: 4px 4px 0 0; color: #22262c; }
.tab.on { background: #fff; }
.grip { width: 7px; height: 11px; background: radial-gradient(circle at 1px 1px, #7b90b4 1px, transparent 2px) 0 0 / 5px 4px; }
.tabpin { margin-left: auto; padding-right: 11px; color: #4a5f80; }
.tab.doc { gap: 12px; padding: 0 13px 0 12px; font-weight: 400; color: #111; }
.vb { width: 32px; }
.vb.on { background: #cdd3dd; }

.findrow { display: flex; align-items: center; height: 51px; padding: 0 19px 0 12px; gap: 16px; border-bottom: 1px solid #b9c4d4; margin-bottom: 1px; flex: none; }
.field-act { flex: 1; }
.findrow button { width: 18px; }
.tree li { height: 32px; display: flex; align-items: center; gap: 9px; padding-left: 27px; margin: 0 21px 0 1px; white-space: nowrap; }
.tree li span { overflow: hidden; text-overflow: ellipsis; }
.tree svg { width: 13px; height: 14px; }
.tree .sub { padding-left: 38px; }
.tree .top { padding-left: 15px; }
.tree .sel { background: #e2eeff; }
.tree .cat { font-style: italic; color: #5c6b84; }
.hidden-groups { display: flex; align-items: center; gap: 6px; height: 32px; padding: 0 12px; color: #6b82ab; }
.hidden-groups::before, .hidden-groups::after { content: ""; flex: 1; border-top: 1px solid #5b76a3; margin-right: 4px; }
.hidden-groups::after { margin: 0 0 0 4px; }
.scroll { position: absolute; right: 6px; top: 193px; width: 8px; height: 212px; border-radius: 4px; background: #b0bccf; }

.steps { flex: 1; min-height: 0; display: flex; flex-direction: column; justify-content: flex-end; overflow: hidden; }
.steps li { flex: none; display: grid; grid-template-columns: 94px 18px 1fr; column-gap: 16px; align-items: center; position: relative; height: 58px; border-bottom: 1px solid #e6e9ee; white-space: nowrap; background: linear-gradient(#a9b8cc, #a9b8cc) 93px 0 / 1px 100% no-repeat; }
.steps li:has(br) { height: 154px; }
.steps li.tail { height: 9px; border: 0; }
.steps .sel { background-color: #e2eeff; border-color: #2f80ed; box-shadow: 0 -1px #2f80ed; }
.steps .n { font-weight: 400; color: #4f607b; text-align: right; padding-right: 11px; }
.steps svg { width: 18px; height: 18px; }
.steps div { align-self: start; padding-top: 13px; margin-left: -8px; }
.steps h3 { font-size: 14px; line-height: 18px; font-weight: 600; color: #000; }
.steps p { font-size: 13px; line-height: 16px; color: #5a6b85; }
.steps em { color: #2f80ed; }
.bp { position: absolute; left: 87px; width: 12px; height: 12px; border-radius: 50%; background: #d3302f; }

.selinfo { padding: 22px 16px 16px; line-height: 20px; }
.check { display: flex; align-items: center; gap: 8px; padding-left: 20px; height: 20px; }
.check input { appearance: none; width: 20px; height: 20px; border-radius: 4px; background: #2f80ff; margin: 0; position: relative; }
.check input::after { content: ""; position: absolute; left: 7px; top: 3px; width: 6px; height: 11px; border: solid #fff; border-width: 0 2px 2px 0; transform: rotate(40deg); }

.results { flex: none; height: 200px; }
.resbody { flex: 1; display: flex; justify-content: space-between; align-items: start; padding: 5px 25px 0 5px; font: 13px/20px "Noto Sans", sans-serif; color: #000; }
.resbody button { margin-top: 14px; }

/* File explorer window */
.explorer { position: absolute; left: 662px; top: 316px; width: 1121px; height: 591px; display: flex; flex-direction: column; background: #191919; color: #e8e8e8; font-size: 12px; border-radius: 8px; overflow: hidden; box-shadow: 0 0 0 1px rgba(90, 90, 90, .5), 0 0 14px rgba(0, 0, 0, .3), 0 28px 44px rgba(0, 0, 0, .45); }
.x-tabs { height: 39px; background: #202020; display: flex; align-items: center; }
.x-tab { align-self: end; width: 239px; height: 32px; margin-left: 9px; padding: 0 14px 0 8px; display: flex; align-items: center; gap: 10px; background: #2c2c2c; border-radius: 8px 8px 0 0; font-weight: 600; }
.x-tab span { flex: 1; }
.x-plus { margin-left: 17px; }
.x-ctl { display: flex; align-self: start; gap: 34px; padding: 8px 17px 0 0; color: #8c8c8c; }
.x-nav { height: 49px; background: #2c2c2c; border-bottom: 1px solid #3f3f3f; display: flex; align-items: center; gap: 8px; padding-right: 11px; font-size: 13px; }
.x-arrows { display: flex; width: 193px; padding-left: 3px; }
.x-arrows button { width: 48px; }
.x-arrows svg { width: 14px; height: 14px; }
.dim { color: #777; }
.x-path { flex: 1; display: flex; align-items: center; height: 32px; border-radius: 4px; background: #383838; padding-left: 3px; }
.x-path i { width: 42px; text-align: center; font-size: 18px; line-height: 20px; font-style: normal; padding-bottom: 4px; }
.x-path .chip { height: 24px; padding: 0 8px; gap: 8px; background: #454545; border-radius: 4px; }
.x-path .chip + i { width: 30px; }
.x-path i + button:nth-child(3) { width: 37px; padding-right: 12px; font-size: 18px; }
.x-search { width: 259px; height: 32px; border-radius: 4px; background: #383838; display: flex; align-items: center; padding: 0 13px 0 15px; }
.x-search input { flex: 1; }
.x-search input::placeholder { color: #c4c4c4; opacity: 1; }
.x-cmd { height: 47px; display: flex; align-items: center; border-bottom: 1px solid #3a3a3a; padding: 0 22px 0 18px; }
.x-cmd button { gap: 8px; }
.cv { width: 8px; height: 8px; color: #aaa; }
.new { width: 88px; justify-content: flex-start; }
.x-acts { display: flex; border: solid #333; border-width: 0 1px; height: 32px; width: 293px; padding-left: 2px; }
.x-acts button { width: 48px; }
.x-acts svg { width: 16px; height: 16px; }
.sort { margin-left: 17px; }
.view { margin-left: 29px; }
.more { margin-left: 20px; }
.x-body { flex: 1; display: flex; font-size: 11px; }
.x-side { width: 159px; border-right: 1px solid #2e2e2e; padding: 6px 21px 0 34px; position: relative; }
.x-side li { height: 32px; display: flex; align-items: center; gap: 5px; white-space: nowrap; color: #fff; }
.x-side li svg { width: 16px; height: 16px; }
.x-side li span { flex: 1; min-width: 0; overflow: hidden; }
.x-side li .wp { width: 12px; height: 12px; margin-left: -5px; }
.x-side hr { margin: 16px 6px 15px -24px; border: 0; border-top: 1px solid #3f3f3f; }
.x-scroll { position: absolute; right: 10px; top: 17px; width: 2px; height: 282px; background: #9a9a9a; }
.files { border-collapse: collapse; table-layout: fixed; align-self: start; }
.files th { height: 25px; text-align: left; font-weight: 400; color: #d5d5d5; border-right: 1px solid #5a5a5a; padding: 0 7px; position: relative; }
.files td { height: 38px; padding: 0 7px; color: #d5d5d5; white-space: nowrap; }
.files .c1 { width: 272px; padding-left: 31px; }
.files .c2 { width: 144px; }
.files .c3 { width: 120px; }
.files .c4 { width: 80px; }
.files td:first-child { padding-left: 18px; color: #fff; }
.files td svg { vertical-align: middle; margin-right: 5px; }
.files .num { text-align: right; }
.caret { position: absolute; left: 145px; top: 0; width: 8px; height: 8px; }
.x-status { height: 24px; background: #1c1c1c; display: flex; align-items: center; padding: 0 4px 0 14px; }
.x-status i { width: 1px; height: 11px; background: #eee; margin-left: 10px; }
.x-status button { width: 20px; height: 18px; }
.x-status .on { border: 1px solid #888; background: #444; margin-right: 2px; }

/* Task bars */
.bar { flex: none; display: grid; grid-template-columns: 1fr auto 1fr; color: #fff; border-top: 1px solid #4a484e; position: relative; }
.bar-left { height: 48px; background: linear-gradient(90deg, #20241f 0, #1d2724 20%, #142a2d 33%, #1a2350 41%, #38204a 50%, #2a1570 59%, #401355 66%, #2c1248 78%, #1c1632 100%); }
.bar-right { height: 60px; background: linear-gradient(90deg, #1c1a2c 0, #2a1b38 30%, #332425 48%, #36252a 58%, #3b1826 67%, #431b18 77%, #2f1a18 100%); }
.apps { display: flex; }
.apps button { position: relative; }
.run::after { content: ""; position: absolute; left: 50%; transform: translateX(-50%); border-radius: 2px; background: #96909e; }
.bar-left .apps button { width: 44px; }
.bar-left .apps svg { width: 24px; height: 24px; }
.bar-left .run::after { width: 6px; height: 3px; bottom: 5px; }
.bar-left .active { margin: 3px 3px; border-radius: 4px; background: rgba(255, 255, 255, .08); }
.bar-left .apps button.active { width: 38px; }
.bar-left .run.active::after { width: 16px; bottom: 2px; background: #d99be0; }
.badge { position: absolute; top: 6px; right: 4px; width: 16px; height: 16px; border-radius: 50%; background: #c42b1c; font-size: 11px; line-height: 16px; text-align: center; }
.bar-right .apps button { width: 55px; }
.bar-right .apps svg { width: 30px; height: 30px; }
.bar-right .run::after { width: 8px; height: 4px; bottom: 6px; }
.bar-right .active { margin: 4px 3px; border-radius: 5px; background: rgba(255, 255, 255, .08); }
.bar-right .apps button.active { width: 49px; }
.bar-right .run.active::after { width: 20px; bottom: 2px; background: #d99be0; }
.bar-right .badge { width: 20px; height: 20px; line-height: 20px; font-size: 13px; top: 8px; right: 6px; }
.tray { display: flex; align-items: center; justify-content: flex-end; }
.tray time { text-align: right; }
.bar-left .tray { font-size: 12px; line-height: 16px; padding-right: 22px; }
.bar-right .tray { font-size: 14px; line-height: 20px; padding-right: 25px; gap: 9px; }
.sys { display: flex; gap: 10px; margin: 0 11px 0 14px; }

/* Chrome, incognito window */
.monitor-right { background: #001d4b; }
.desk { flex: 1; min-height: 0; display: flex; position: relative; }
.behind { position: absolute; inset: 0 8px 0 9px; background: #282828; border: 1px solid #3b4660; border-bottom: 0; border-radius: 10px 10px 0 0; }
.behind i { position: absolute; left: 0; top: 49px; bottom: 0; width: 20px; border-radius: 8px 0 0 0; background: linear-gradient(#454545, #454545) 0 100px / 100% 1px no-repeat #363636; }
.chrome { position: relative; flex: 1; margin: 12px 0 0 21px; display: flex; flex-direction: column; background: #3c3c3c; border: 1px solid #565656; border-width: 1px 0 0 1px; border-radius: 9px 9px 0 0; color: #dadada; font-size: 14px; overflow: hidden; }
.c-tabs { flex: none; height: 49px; background: #1f2120; display: flex; align-items: center; }
.c-list { width: 35px; height: 35px; margin: 0 7px; border-radius: 12px; background: #3c3c3c; }
.c-tab { position: relative; align-self: end; width: 291px; height: 43px; padding: 0 14px 6px 11px; display: flex; align-items: center; gap: 11px; background: #3c3c3c; border-radius: 12px 12px 0 0; color: #e3e3e3; }
.c-tab span { flex: 1; }
.c-tab::before, .c-tab::after { content: ""; position: absolute; bottom: 0; width: 12px; height: 12px; }
.c-tab::before { right: 100%; background: radial-gradient(circle at 0 0, transparent 12px, #3c3c3c 12px); }
.c-tab::after { left: 100%; background: radial-gradient(circle at 100% 0, transparent 12px, #3c3c3c 12px); }
.c-plus { margin-left: 16px; }
.c-ctl { display: flex; gap: 41px; padding-right: 16px; color: #fff; }
.c-bar { flex: none; height: 60px; display: flex; align-items: center; padding-right: 21px; }
.c-arrows { display: flex; width: 148px; padding-left: 4px; }
.c-arrows button { width: 45px; }
.c-arrows svg { width: 17px; height: 17px; }
.omni { flex: 1; height: 45px; border: 2px solid #a8c7fa; border-radius: 23px; display: flex; align-items: center; gap: 10px; padding: 0 20px 0 11px; }
.omni input { flex: 1; }
.ext { width: 22px; margin-left: 19px; }
.ext + .ext { margin-left: 24px; }
.c-sep { flex: none; width: 3px; height: 20px; border-radius: 2px; background: #666; margin: 0 12px 0 20px; }
.incog { width: 145px; height: 42px; border-radius: 21px; background: #282828; gap: 10px; color: #e3e3e3; }
.menu { margin-left: 25px; }
.c-fav { flex: none; height: 41px; display: flex; align-items: center; justify-content: flex-end; border-bottom: 1px solid #484848; padding: 0 13px 9px 0; }
.c-fav .c-sep { margin: 0 20px 0 0; }
.c-fav button { gap: 11px; color: #c7c7c7; }
.page { width: 754px; margin: 0 auto; padding: 90px 0 0 4px; font-size: 16px; line-height: 25px; color: #e3e3e3; }
.hero { display: block; width: 150px; height: 150px; margin: 0 auto 30px; }
.page h2 { font-size: 26px; line-height: 40px; text-align: center; margin-bottom: 30px; }
.page p, .cols div, .cookies { white-space: nowrap; }
.page a { color: #7cacf8; text-decoration: underline; }
.page em { color: #fff; }
.cols { display: grid; grid-template-columns: 1fr 1fr; column-gap: 38px; margin-top: 30px; }
.cols ul { list-style: disc; padding-left: 20px; margin-top: 5px; }
.cookies { display: flex; justify-content: space-between; align-items: center; height: 130px; margin-top: 28px; padding: 0 25px; background: #282828; border-radius: 4px; }
.cookies input { appearance: none; width: 32px; height: 20px; margin: 0; border-radius: 10px; background: #a8c7fa; position: relative; }
.cookies input::after { content: ""; position: absolute; right: 2px; top: 2px; width: 16px; height: 16px; border-radius: 50%; background: #062e6f; }
```
